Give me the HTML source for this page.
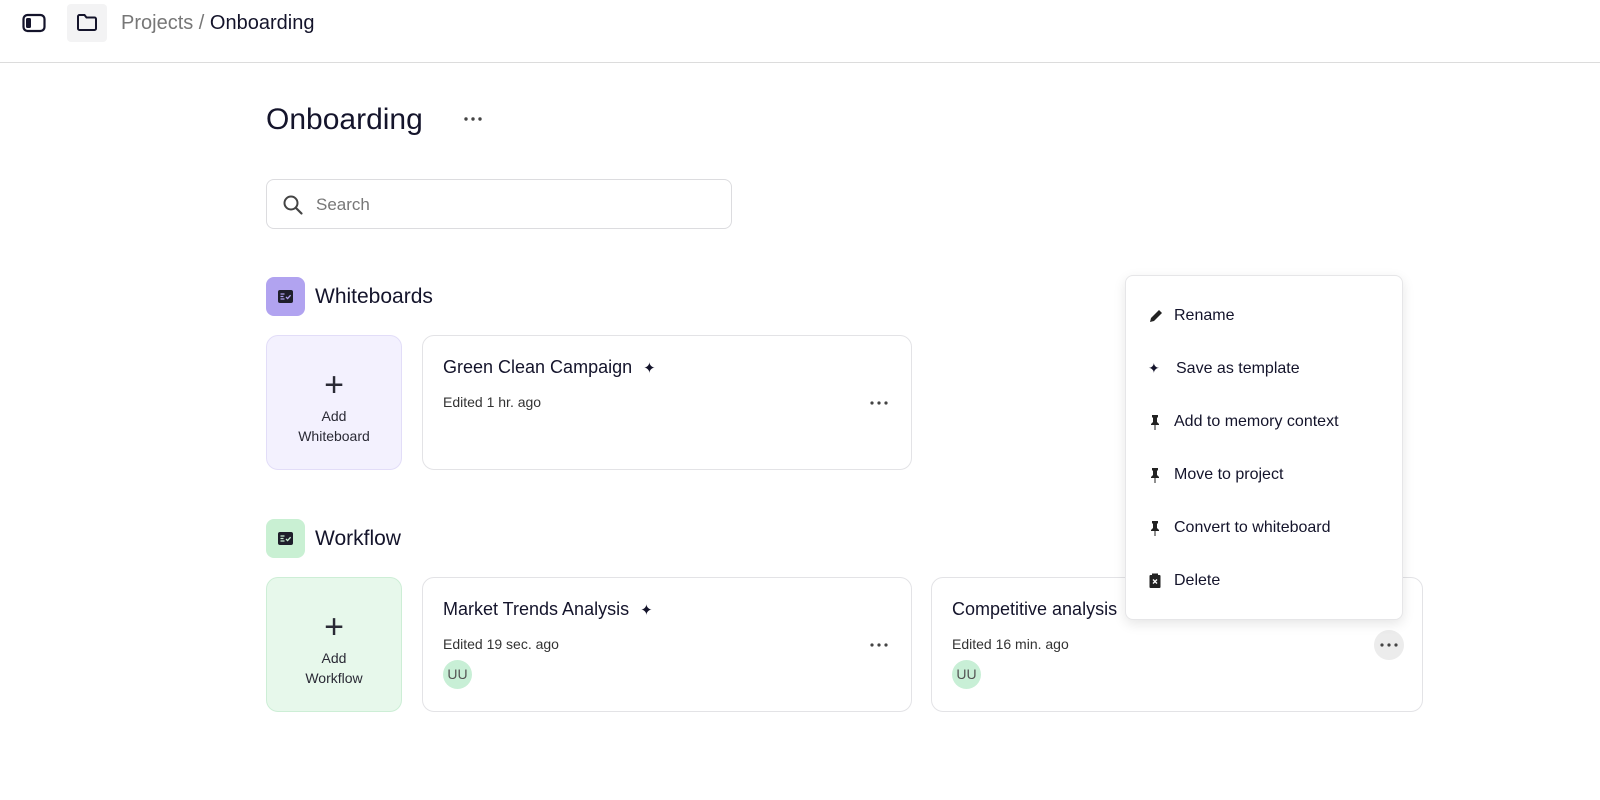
<!DOCTYPE html>
<html><head><meta charset="utf-8"><style>
*{box-sizing:border-box;margin:0;padding:0}
body{width:1600px;height:800px;background:#fff;font-family:"Liberation Sans",sans-serif;color:#14142b;position:relative;overflow:hidden}
.a{position:absolute}
.card{position:absolute;border:1px solid #e3e3e6;border-radius:12px;background:#fff}
.add{position:absolute;border-radius:12px;text-align:center;font-size:14px;color:#2a2a35;line-height:20px}
.plus{font-size:34px;line-height:34px;font-weight:300;margin-top:32px;margin-bottom:4px}
.t{position:absolute;left:20px;top:21px;font-size:18px;color:#14142b}
.e{position:absolute;left:20px;top:58px;font-size:14px;color:#333}
.dots{position:absolute}
.av{position:absolute;left:20px;top:82px;width:29px;height:29px;border-radius:50%;background:#c8efd6;color:#555;font-size:14px;text-align:center;line-height:29px}
.mi{position:absolute;left:48px;font-size:16px;color:#14142b}
.ic{position:absolute;left:22px}
</style></head><body>
<svg class="a" style="left:22px;top:13px" width="24" height="20" viewBox="0 0 24 20"><rect x="1.5" y="2" width="21" height="16" rx="4" fill="none" stroke="#14142b" stroke-width="2.2"/><rect x="4" y="5" width="5" height="10" rx="1.5" fill="#14142b"/></svg>
<div class="a" style="left:67px;top:4px;width:40px;height:38px;background:#f3f3f4;border-radius:4px"></div>
<svg class="a" style="left:76px;top:13px" width="22" height="19" viewBox="0 0 22 19"><path d="M2 3.5a1.5 1.5 0 0 1 1.5-1.5h5l2 2.5h8a1.5 1.5 0 0 1 1.5 1.5v9.5a1.5 1.5 0 0 1-1.5 1.5h-15a1.5 1.5 0 0 1-1.5-1.5z" fill="none" stroke="#14142b" stroke-width="2"/></svg>
<div class="a" style="left:121px;top:12px;font-size:20px;color:#777">Projects / <span style="color:#14142b">Onboarding</span></div>
<div class="a" style="left:0;top:62px;width:1600px;height:1px;background:#dcdcdc"></div>

<div class="a" style="left:266px;top:103px;font-size:30px;color:#14142b">Onboarding</div>
<svg class="dots" style="left:463px;top:116px" width="20" height="6"><circle cx="3" cy="3" r="1.7" fill="#444"/><circle cx="10" cy="3" r="1.7" fill="#444"/><circle cx="17" cy="3" r="1.7" fill="#444"/></svg>

<div class="a" style="left:266px;top:179px;width:466px;height:50px;border:1px solid #dcdcdf;border-radius:8px"></div>
<svg class="a" style="left:282px;top:194px" width="22" height="22" viewBox="0 0 22 22"><circle cx="9" cy="9" r="6.5" fill="none" stroke="#444" stroke-width="2"/><path d="M14 14l5.5 5.5" stroke="#444" stroke-width="2.2" stroke-linecap="round"/></svg>
<div class="a" style="left:316px;top:195px;font-size:17px;color:#777">Search</div>

<div class="a" style="left:266px;top:277px;width:39px;height:39px;border-radius:8px;background:#b1a3f0"></div>
<svg class="a" style="left:277px;top:288px" width="17" height="17" viewBox="0 0 17 17"><rect x="1" y="2" width="15" height="13" rx="2" fill="#1e1e2a"/><path d="M3.5 6h4M3.5 8.5h3M3.5 11h4" stroke="#b1a3f0" stroke-width="1.2"/><path d="M9 9l1.6 1.6 3-3.4" stroke="#b1a3f0" stroke-width="1.3" fill="none"/></svg>
<div class="a" style="left:315px;top:285px;font-size:21px">Whiteboards</div>

<div class="add" style="left:266px;top:335px;width:136px;height:135px;background:#f3f1fe;border:1px solid #e2ddf8"><div class="plus">+</div>Add<br>Whiteboard</div>
<div class="card" style="left:422px;top:335px;width:490px;height:135px"><div class="t">Green Clean Campaign <span style="font-size:15px;margin-left:6px">✦</span></div><div class="e">Edited 1 hr. ago</div><svg class="dots" style="left:446px;top:64px" width="20" height="6"><circle cx="3" cy="3" r="1.6" fill="#444"/><circle cx="10" cy="3" r="1.6" fill="#444"/><circle cx="17" cy="3" r="1.6" fill="#444"/></svg></div>

<div class="a" style="left:266px;top:519px;width:39px;height:39px;border-radius:8px;background:#c9f0d3"></div>
<svg class="a" style="left:277px;top:530px" width="17" height="17" viewBox="0 0 17 17"><rect x="1" y="2" width="15" height="13" rx="2" fill="#1e1e2a"/><path d="M3.5 6h4M3.5 8.5h3M3.5 11h4" stroke="#c9f0d3" stroke-width="1.2"/><path d="M9 9l1.6 1.6 3-3.4" stroke="#c9f0d3" stroke-width="1.3" fill="none"/></svg>
<div class="a" style="left:315px;top:527px;font-size:21px">Workflow</div>

<div class="add" style="left:266px;top:577px;width:136px;height:135px;background:#e7f8eb;border:1px solid #cdeed6"><div class="plus">+</div>Add<br>Workflow</div>
<div class="card" style="left:422px;top:577px;width:490px;height:135px"><div class="t">Market Trends Analysis <span style="font-size:15px;margin-left:6px">✦</span></div><div class="e">Edited 19 sec. ago</div><svg class="dots" style="left:446px;top:64px" width="20" height="6"><circle cx="3" cy="3" r="1.6" fill="#444"/><circle cx="10" cy="3" r="1.6" fill="#444"/><circle cx="17" cy="3" r="1.6" fill="#444"/></svg><div class="av">UU</div></div>
<div class="card" style="left:931px;top:577px;width:492px;height:135px"><div class="t">Competitive analysis</div><div class="e">Edited 16 min. ago</div><div class="a" style="left:442px;top:52px;width:30px;height:30px;border-radius:50%;background:#ececec"></div><svg class="dots" style="left:447px;top:64px" width="20" height="6"><circle cx="3" cy="3" r="1.6" fill="#444"/><circle cx="10" cy="3" r="1.6" fill="#444"/><circle cx="17" cy="3" r="1.6" fill="#444"/></svg><div class="av">UU</div></div>

<div class="a" style="left:1125px;top:275px;width:278px;height:345px;background:#fff;border:1px solid #e6e6e8;border-radius:8px;box-shadow:0 4px 12px rgba(0,0,0,0.1)">
<svg class="ic" style="top:32px" width="16" height="16" viewBox="0 0 16 16"><path d="M2 14l1-4 8-8 3 3-8 8z" fill="#222"/></svg><div class="mi" style="top:31px">Rename</div>
<div class="ic" style="top:84px;font-size:14px">✦</div><div class="mi" style="top:84px;left:50px">Save as template</div>
<svg class="ic" style="top:138px" width="14" height="16" viewBox="0 0 14 16"><path d="M4 1h6v2l-1 1v4l2 2v1H3v-1l2-2V4L4 3zM6.5 11h1v5h-1z" fill="#222"/></svg><div class="mi" style="top:137px">Add to memory context</div>
<svg class="ic" style="top:191px" width="14" height="16" viewBox="0 0 14 16"><path d="M4 1h6v2l-1 1v4l2 2v1H3v-1l2-2V4L4 3zM6.5 11h1v5h-1z" fill="#222"/></svg><div class="mi" style="top:190px">Move to project</div>
<svg class="ic" style="top:244px" width="14" height="16" viewBox="0 0 14 16"><path d="M4 1h6v2l-1 1v4l2 2v1H3v-1l2-2V4L4 3zM6.5 11h1v5h-1z" fill="#222"/></svg><div class="mi" style="top:243px">Convert to whiteboard</div>
<svg class="ic" style="top:297px" width="14" height="16" viewBox="0 0 14 16"><rect x="1.5" y="2" width="11" height="13" rx="1" fill="#222"/><rect x="4" y="0.5" width="6" height="2" fill="#222"/><path d="M5 6.5l4 4M9 6.5l-4 4" stroke="#fff" stroke-width="1.3"/></svg><div class="mi" style="top:296px">Delete</div>
</div>
</body></html>
